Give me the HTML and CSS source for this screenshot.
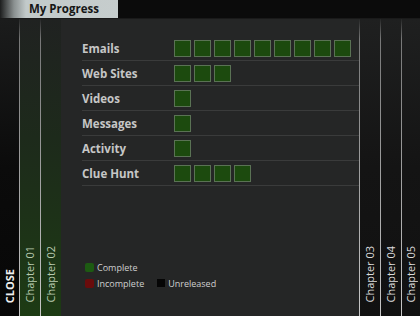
FILE: index.html
```html
<!DOCTYPE html>
<html lang="en">
<head>
    <meta charset="UTF-8">
    <meta name="viewport" content="width=device-width, initial-scale=1.0">
    <title>My Progress</title>
    <link rel="stylesheet" href="styles.css">
</head>
<body>
    <div class="screen">
        <div class="topbar">
            <div class="tab">My Progress</div>
        </div>
        <div class="main">
            <div class="strip close"><span class="label">CLOSE</span></div>
            <div class="sep"></div>
            <div class="strip done"><span class="label">Chapter 01</span></div>
            <div class="sep"></div>
            <div class="strip done"><span class="label">Chapter 02</span></div>

            <div class="content">
                <div class="table">
                    <div class="row">
                        <div class="name">Emails</div>
                        <div class="boxes">
                            <div class="box"></div><div class="box"></div><div class="box"></div>
                            <div class="box"></div><div class="box"></div><div class="box"></div>
                            <div class="box"></div><div class="box"></div><div class="box"></div>
                        </div>
                    </div>
                    <div class="row">
                        <div class="name">Web Sites</div>
                        <div class="boxes">
                            <div class="box"></div><div class="box"></div><div class="box"></div>
                        </div>
                    </div>
                    <div class="row">
                        <div class="name">Videos</div>
                        <div class="boxes"><div class="box"></div></div>
                    </div>
                    <div class="row">
                        <div class="name">Messages</div>
                        <div class="boxes"><div class="box"></div></div>
                    </div>
                    <div class="row">
                        <div class="name">Activity</div>
                        <div class="boxes"><div class="box"></div></div>
                    </div>
                    <div class="row">
                        <div class="name">Clue Hunt</div>
                        <div class="boxes">
                            <div class="box"></div><div class="box"></div>
                            <div class="box"></div><div class="box"></div>
                        </div>
                    </div>
                </div>

                <div class="legend">
                    <div class="key"><span class="dot complete"></span>Complete</div>
                    <div class="legend-line">
                        <div class="key"><span class="dot incomplete"></span>Incomplete</div>
                        <div class="key"><span class="dot unreleased"></span>Unreleased</div>
                    </div>
                </div>
            </div>

            <div class="sep"></div>
            <div class="strip"><span class="label">Chapter 03</span></div>
            <div class="sep"></div>
            <div class="strip"><span class="label">Chapter 04</span></div>
            <div class="sep"></div>
            <div class="strip last"><span class="label">Chapter 05</span></div>
        </div>
    </div>
</body>
</html>
```

FILE: styles.css
```css
* {
    margin: 0;
    padding: 0;
    box-sizing: border-box;
}
body {
    background: #252626;
    font-family: "Open Sans", "DejaVu Sans", sans-serif;
}
.screen {
    width: 420px;
    height: 316px;
    display: flex;
    flex-direction: column;
    background: #252626;
}
.topbar {
    height: 19px;
    background: #0b0b0b;
    display: flex;
    border-bottom: 1px solid #1a1a1a;
}
.tab {
    width: 118px;
    height: 18px;
    background: linear-gradient(to right, #1c1d1d 0px, #8a9090 14px, #c2caca 26px, #c6cdcd 100%);
    color: #151616;
    font-weight: 700;
    font-size: 11.5px;
    line-height: 18px;
    padding-left: 29px;
}
.main {
    flex: 1;
    display: flex;
}
.strip {
    width: 20px;
    display: flex;
    align-items: flex-end;
    justify-content: center;
    padding-bottom: 13px;
    background: linear-gradient(to bottom, #1f2020, #141414 50%, #111111);
    color: #dcdcdc;
}
.strip.close {
    width: 19px;
    background: linear-gradient(to bottom, #1b1c1c, #0b0b0b 50%, #070707);
    color: #f0f0f0;
    font-weight: 700;
}
.strip.done {
    background: linear-gradient(to bottom, #202221, #1d2a1b 40%, #1d3b14);
    color: #b8cbb0;
}
.strip.last {
    width: 18px;
}
.label {
    writing-mode: vertical-rl;
    transform: rotate(180deg);
    font-size: 11px;
    line-height: 12px;
    white-space: nowrap;
}
.sep {
    width: 1px;
    background: linear-gradient(to bottom, rgba(200, 200, 200, 0) 0px, rgba(200, 200, 200, 0.5) 20px, #c8c8c8 100%);
}
.content {
    flex: 1;
    display: flex;
    flex-direction: column;
    padding: 17px 0 25px 21px;
}
.row {
    display: flex;
    align-items: center;
    height: 25px;
    border-bottom: 1px solid #3a3b3b;
}
.name {
    width: 92px;
    color: #c6c6c6;
    font-weight: 700;
    font-size: 11.5px;
}
.boxes {
    display: flex;
    gap: 3px;
}
.box {
    width: 17px;
    height: 17px;
    background: #1c4a0e;
    border: 1px solid #5a7254;
}
.legend {
    margin-top: auto;
    padding-left: 3px;
    color: #cfcfcf;
    font-size: 9px;
}
.legend-line {
    display: flex;
    gap: 13px;
}
.key {
    display: flex;
    align-items: center;
    height: 16px;
}
.dot {
    width: 9px;
    height: 9px;
    border-radius: 2px;
    margin-right: 3px;
}
.dot.complete {
    background: #1d5a12;
}
.dot.incomplete {
    background: #6a0c0c;
}
.dot.unreleased {
    width: 8px;
    height: 8px;
    border-radius: 0;
    background: #050505;
}
```
